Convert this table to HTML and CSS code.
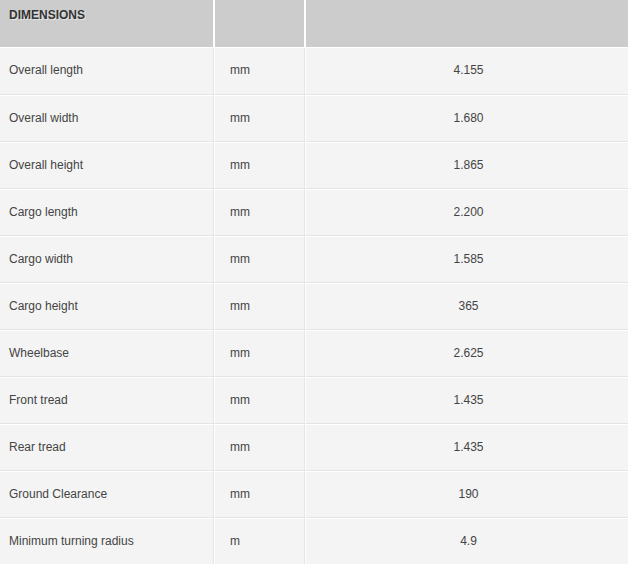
FILE: index.html
```html
<!DOCTYPE html>
<html>
<head>
<meta charset="utf-8">
<link rel="stylesheet" href="styles.css">
</head>
<body>
<table class="spec">
  <thead>
    <tr><th class="c1">DIMENSIONS</th><th class="c2"></th><th class="c3"></th></tr>
  </thead>
  <tbody>
    <tr><td class="c1">Overall length</td><td class="c2">mm</td><td class="c3">4.155</td></tr>
    <tr><td class="c1">Overall width</td><td class="c2">mm</td><td class="c3">1.680</td></tr>
    <tr><td class="c1">Overall height</td><td class="c2">mm</td><td class="c3">1.865</td></tr>
    <tr><td class="c1">Cargo length</td><td class="c2">mm</td><td class="c3">2.200</td></tr>
    <tr><td class="c1">Cargo width</td><td class="c2">mm</td><td class="c3">1.585</td></tr>
    <tr><td class="c1">Cargo height</td><td class="c2">mm</td><td class="c3">365</td></tr>
    <tr><td class="c1">Wheelbase</td><td class="c2">mm</td><td class="c3">2.625</td></tr>
    <tr><td class="c1">Front tread</td><td class="c2">mm</td><td class="c3">1.435</td></tr>
    <tr><td class="c1">Rear tread</td><td class="c2">mm</td><td class="c3">1.435</td></tr>
    <tr><td class="c1">Ground Clearance</td><td class="c2">mm</td><td class="c3">190</td></tr>
    <tr><td class="c1">Minimum turning radius</td><td class="c2">m</td><td class="c3">4.9</td></tr>
  </tbody>
</table>
</body>
</html>
```
FILE: styles.css
```css
html, body {
  margin: 0;
  padding: 0;
  background: #f4f4f4;
  overflow: hidden;
}
.spec {
  border-collapse: separate;
  border-spacing: 0;
  table-layout: fixed;
  width: 632px;
  font-family: "Liberation Sans", Arial, sans-serif;
  font-size: 12px;
  color: #444;
}
.spec th {
  background: #cccccc;
  height: 48px;
  box-sizing: border-box;
  padding: 8px 8px 0 9px;
  text-align: left;
  vertical-align: top;
  font-weight: bold;
  font-size: 12px;
  color: #333;
  text-shadow: 1px 1px 0 rgba(255,255,255,0.5);
  border-left: 1px solid #fff;
  border-right: 1px solid #fff;
  border-bottom: 1px solid #fff;
}
.spec th.c1 { border-left: 0; }
.spec td {
  background: #f4f4f4;
  height: 47px;
  box-sizing: border-box;
  padding: 0 8px 2px 8px;
  vertical-align: middle;
  border-top: 1px solid #fff;
  border-bottom: 1px solid #e4e4e4;
  border-left: 1px solid #fff;
  border-right: 1px solid #e4e4e4;
}
.spec tbody tr:first-child td { border-top: 0; }
.spec td.c1 { border-left: 0; padding-left: 9px; }
.c1 { width: 214px; box-sizing: border-box; }
.c2 { width: 91px; box-sizing: border-box; }
.spec td.c2 { padding-left: 15px; }
.spec td.c3 { text-align: center; }
```
